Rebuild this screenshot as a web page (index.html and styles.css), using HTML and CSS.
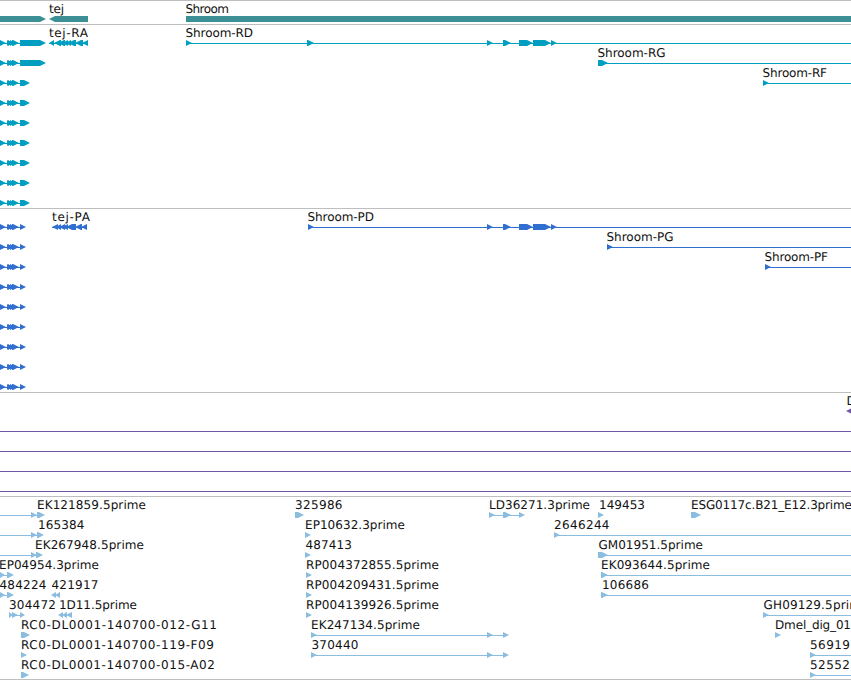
FILE: index.html
```html
<!DOCTYPE html>
<html lang="en">
<head>
  <meta charset="UTF-8">
  <title>Genome Browser</title>
  <meta name="viewport" content="width=device-width, initial-scale=1">
  <link rel="stylesheet" href="styles.css">
</head>
<body>

  <main class="browser">
    <section class="track genes" id="genes"></section>
    <section class="track transcripts" id="transcripts"></section>
    <section class="track proteins" id="proteins"></section>
    <section class="track insertions" id="insertions"></section>
    <section class="track ests" id="ests"></section>
  </main>

  <script src="tracks.js"></script>
</body>
</html>
```
FILE: styles.css
```css
* { box-sizing: border-box; }

body {
  margin: 0;
  background-color: #fff;
  font-family: "DejaVu Sans", Verdana, sans-serif;
  font-size: 12px;
  overflow: hidden;
}

.browser {
  display: flex;
  flex-direction: column;
  height: 680px;
  border-bottom: 1px solid #bebebe;
}

.track {
  flex: none;
  border-top: 1px solid #bebebe;
  padding-bottom: 3px;
}

.track:last-child {
  padding-bottom: 2px;
}

.row {
  display: block;
  width: 100%;
  height: 20px;
  overflow: visible;
}

.row text {
  fill: #111;
  text-rendering: geometricPrecision;
}

.genes { fill: #3d8f96; }
.transcripts { fill: #009fc1; }
.proteins { fill: #306fd0; }
.insertions { fill: #7158a2; }
.ests { fill: #8abde0; }
```
FILE: tracks.js
```javascript
const END = 851;
const SVG = 'http://www.w3.org/2000/svg';

// labels: [x, width, text]   lines: [from, to]
// fwd / rev: [from, to] exons pointing right / left   bars: plain blocks
const rnaExons = [[0, 6], [7, 11], [8, 13], [10, 15], [12, 19]];
const exonsD = [[487, 493], [503, 511], [519, 533], [533, 551], [551, 557]];
const rnaShort = { lines: [[0, 20]], fwd: [...rnaExons, [20, 30]] };
const cdsShort = { lines: [[0, 20]], fwd: [...rnaExons, [20, 26]] };

const tracks = {
  genes: [
    {
      labels: [[49, 15, 'tej'], [185.5, 43.5, 'Shroom']],
      fwd: [[0, 46]], rev: [[49, 88]], bars: [[186, END]]
    }
  ],
  transcripts: [
    {
      labels: [[49, 39, 'tej-RA'], [185.5, 67.5, 'Shroom-RD']],
      lines: [[0, 20], [49, 88], [186, END]],
      fwd: [...rnaExons, [20, 46], [186, 192], [307, 314], ...exonsD],
      rev: [[49, 54], [54, 61], [58, 65], [62, 68], [65, 71], [68, 76], [75, 83], [82, 88]]
    },
    {
      labels: [[597.5, 68, 'Shroom-RG']],
      lines: [[0, 20], [598, END]],
      fwd: [...rnaExons, [20, 46], [598, 608]]
    },
    {
      labels: [[762.5, 64.5, 'Shroom-RF']],
      lines: [[0, 20], [763, END]],
      fwd: [...rnaShort.fwd, [763, 769]]
    },
    rnaShort, rnaShort, rnaShort, rnaShort, rnaShort, rnaShort
  ],
  proteins: [
    {
      labels: [[52, 38, 'tej-PA'], [307.5, 66.5, 'Shroom-PD']],
      lines: [[0, 20], [52, 87], [308, END]],
      fwd: [...cdsShort.fwd, [308, 314], ...exonsD],
      rev: [[52, 58], [56, 61], [59, 65], [62, 68], [66, 76], [75, 82], [81, 87]]
    },
    {
      labels: [[606.5, 67, 'Shroom-PG']],
      lines: [[0, 20], [607, END]],
      fwd: [...cdsShort.fwd, [607, 613]]
    },
    {
      labels: [[764.5, 63.5, 'Shroom-PF']],
      lines: [[0, 20], [765, END]],
      fwd: [...cdsShort.fwd, [765, 771]]
    },
    cdsShort, cdsShort, cdsShort, cdsShort, cdsShort, cdsShort
  ],
  insertions: [
    { labels: [[846.5, 9, 'D']], rev: [[846, 860]] },
    { lines: [[0, END]] },
    { lines: [[0, END]] },
    { lines: [[0, END]] },
    { lines: [[0, END]] }
  ],
  ests: [
    {
      labels: [[37, 109, 'EK121859.5prime'], [295, 47.5, '325986'], [489, 101, 'LD36271.3prime'],
        [599, 46, '149453'], [691, 161, 'ESG0117c.B21_E12.3prime']],
      lines: [[0, 37], [489, 520]],
      fwd: [[31, 37], [37, 45], [295, 304], [489, 495], [503, 511], [519, 525], [598, 604], [691, 701]]
    },
    {
      labels: [[38, 46.5, '165384'], [305, 100, 'EP10632.3prime'], [554, 55.5, '2646244']],
      lines: [[0, 37], [554, END]],
      fwd: [[31, 37], [37, 44], [305, 311], [554, 560]]
    },
    {
      labels: [[35, 109, 'EK267948.5prime'], [305.5, 46.5, '487413'], [598.5, 104.5, 'GM01951.5prime']],
      lines: [[0, 37], [598, END]],
      fwd: [[31, 37], [36, 43], [305, 311], [598, 608]]
    },
    {
      labels: [[-1, 100, 'EP04954.3prime'], [306, 133, 'RP004372855.5prime'], [601, 109, 'EK093644.5prime']],
      lines: [[0, 8], [601, END]],
      fwd: [[0, 5], [7, 14], [306, 312], [601, 608]]
    },
    {
      labels: [[-0.5, 47, '484224'], [51.5, 47, '421917'], [306, 133, 'RP004209431.5prime'], [602, 47, '106686']],
      lines: [[0, 8], [601, END]],
      fwd: [[0, 5], [7, 14], [306, 312], [601, 608]],
      rev: [[51, 56], [55, 60]]
    },
    {
      labels: [[9, 47, '304472'], [59, 78, '1D11.5prime'], [306, 133, 'RP004139926.5prime'],
        [763.5, 105, 'GH09129.5prime']],
      lines: [[9, 20], [763, END]],
      fwd: [[9, 13], [12, 18], [20, 25], [306, 312], [763, 769]],
      rev: [[58, 63], [62, 67], [66, 72]]
    },
    {
      labels: [[21, 196, 'RC0-DL0001-140700-012-G11'], [311, 109, 'EK247134.5prime'], [775, 76, 'Dmel_dig_01']],
      lines: [[311, 504]],
      fwd: [[21, 30], [311, 317], [487, 493], [503, 509], [775, 781]]
    },
    {
      labels: [[21, 193, 'RC0-DL0001-140700-119-F09'], [311.5, 47, '370440'], [810, 40, '56919']],
      lines: [[311, 504], [810, END]],
      fwd: [[21, 27], [311, 317], [487, 493], [503, 509], [810, 816]]
    },
    {
      labels: [[21, 194, 'RC0-DL0001-140700-015-A02'], [810, 40, '52552']],
      lines: [[810, END]],
      fwd: [[21, 29], [810, 816]]
    }
  ]
};

function add(parent, name, attrs) {
  const el = document.createElementNS(SVG, name);
  for (const key in attrs) el.setAttribute(key, attrs[key]);
  parent.appendChild(el);
  return el;
}

// block that narrows to a tip over its last 6px
function arrow(svg, base, tip) {
  const dir = tip > base ? 1 : -1;
  const neck = tip - dir * Math.min(6, Math.abs(tip - base));
  add(svg, 'polygon', { points: `${base},15 ${neck},15 ${tip},18 ${neck},21 ${base},21` });
}

function drawRow(track, row) {
  const svg = add(track, 'svg', { class: 'row' });
  (row.lines || []).forEach(([a, b]) => add(svg, 'rect', { x: a, y: 18, width: b - a, height: 1 }));
  (row.bars || []).forEach(([a, b]) => add(svg, 'rect', { x: a, y: 15, width: b - a, height: 6 }));
  (row.fwd || []).forEach(([a, b]) => arrow(svg, a, b));
  (row.rev || []).forEach(([a, b]) => arrow(svg, b, a));
  (row.labels || []).forEach(([x, width, text]) => {
    add(svg, 'text', { x, y: 12, textLength: width }).textContent = text;
  });
}

for (const id in tracks) {
  const track = document.getElementById(id);
  tracks[id].forEach(row => drawRow(track, row));
}
```
